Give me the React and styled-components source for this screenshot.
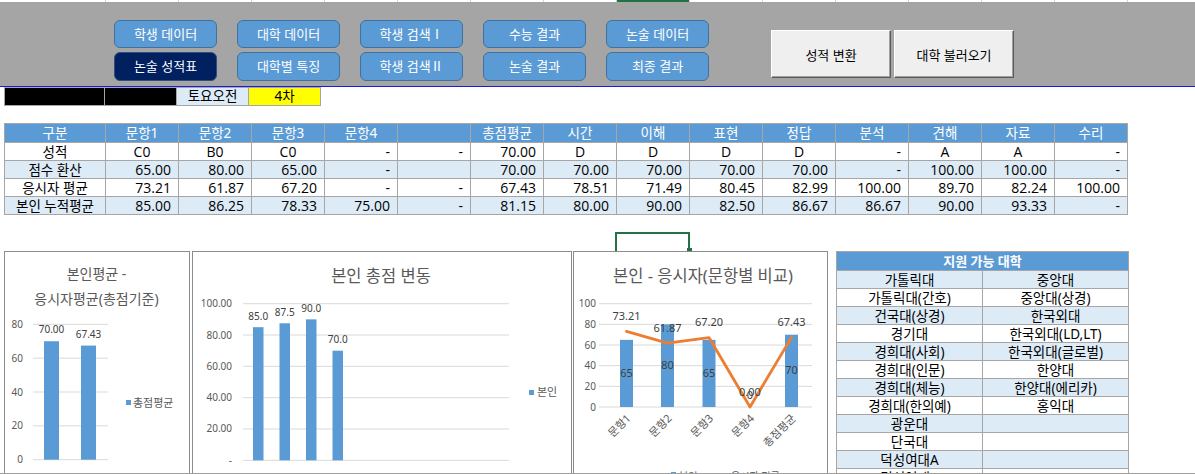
import React from 'react'
import styled, { createGlobalStyle } from 'styled-components'

const CELL_FONT = `"Open Sans", "Noto Sans CJK KR", sans-serif`
const UI_FONT = `"Noto Sans", "Noto Sans CJK KR", sans-serif`

const BLUE = '#5b9bd5'
const LIGHT = '#ddebf7'
const GRID = '#a6a6a6'
const ORANGE = '#ed7d31'
const INK = '#595959'

const GlobalStyle = createGlobalStyle`
  html, body {
    margin: 0;
    padding: 0;
    background: #fff;
  }
  body {
    font-family: ${UI_FONT};
    overflow: hidden;
  }
`

const navTop = ['학생 데이터', '대학 데이터', '학생 검색Ⅰ', '수능 결과', '논술 데이터']
const navBottom = ['논술 성적표', '대학별 특징', '학생 검색Ⅱ', '논술 결과', '최종 결과']

const headers = ['구분', '문항1', '문항2', '문항3', '문항4', '', '총점평균', '시간', '이해', '표현', '정답', '분석', '견해', '자료', '수리']

const rows = [
  { label: '성적', cells: ['C0', 'B0', 'C0', '-', '-', '70.00', 'D', 'D', 'D', 'D', '-', 'A', 'A', '-'] },
  { label: '점수 환산', cells: ['65.00', '80.00', '65.00', '-', '', '70.00', '70.00', '70.00', '70.00', '70.00', '-', '100.00', '100.00', '-'] },
  { label: '응시자 평균', cells: ['73.21', '61.87', '67.20', '-', '-', '67.43', '78.51', '71.49', '80.45', '82.99', '100.00', '89.70', '82.24', '100.00'] },
  { label: '본인 누적평균', cells: ['85.00', '86.25', '78.33', '75.00', '-', '81.15', '80.00', '90.00', '82.50', '86.67', '86.67', '90.00', '93.33', '-'] },
]

const universities = [
  ['가톨릭대', '중앙대'],
  ['가톨릭대(간호)', '중앙대(상경)'],
  ['건국대(상경)', '한국외대'],
  ['경기대', '한국외대(LD,LT)'],
  ['경희대(사회)', '한국외대(글로벌)'],
  ['경희대(인문)', '한양대'],
  ['경희대(체능)', '한양대(에리카)'],
  ['경희대(한의예)', '홍익대'],
  ['광운대', ''],
  ['단국대', ''],
  ['덕성여대A', ''],
  ['덕성여대B', ''],
]

// top sheet row, column edges
const stripCols = [106, ...Array(15).fill(73)]

export default function App() {
  return (
    <Page>
      <GlobalStyle />
      <TopStrip>
        {stripCols.map((w, i) => (
          <StripCell key={i} $w={w} $selected={i === 8} />
        ))}
      </TopStrip>

      <Ribbon>
        <NavGrid>
          {navTop.map(t => (
            <NavButton key={t}>{t}</NavButton>
          ))}
          {navBottom.map((t, i) => (
            <NavButton key={t} $active={i === 0}>{t}</NavButton>
          ))}
        </NavGrid>
        <FormButtons>
          <FormButton>성적 변환</FormButton>
          <FormButton>대학 불러오기</FormButton>
        </FormButtons>
      </Ribbon>

      <InfoRow>
        <InfoCell $w={101} $bg="#000" />
        <InfoCell $w={73} $bg="#000" />
        <InfoCell $w={73} $bg={LIGHT}>토요오전</InfoCell>
        <InfoCell $w={73} $bg="#ffff00">4차</InfoCell>
      </InfoRow>

      <ScoreTable>
        <colgroup>
          <col style={{ width: 101 }} />
          {headers.slice(1).map((_, i) => (
            <col key={i} style={{ width: 73 }} />
          ))}
        </colgroup>
        <thead>
          <tr>
            {headers.map((h, i) => (
              <HeadCell key={i}>{h}</HeadCell>
            ))}
          </tr>
        </thead>
        <tbody>
          {rows.map((r, ri) => (
            <DataRow key={r.label} $shade={ri % 2 === 1}>
              <LabelCell>{r.label}</LabelCell>
              {r.cells.map((c, ci) => (
                <ValueCell key={ci} $center={/^[A-Z]/.test(c)}>{c}</ValueCell>
              ))}
            </DataRow>
          ))}
        </tbody>
      </ScoreTable>

      <Spacer>
        <Selection>
          <Handle />
        </Selection>
      </Spacer>

      <Bottom>
        <ChartCard $w={186}>
          <AverageChart />
        </ChartCard>
        <ChartCard $w={380}>
          <TotalChart />
        </ChartCard>
        <ChartCard $w={255} $ml={1}>
          <CompareChart />
        </ChartCard>
        <UnivTable>
          <thead>
            <tr>
              <UnivHead colSpan={2}>지원 가능 대학</UnivHead>
            </tr>
          </thead>
          <tbody>
            {universities.map((u, i) => (
              <DataRow key={i} $shade={i % 2 === 0}>
                <UnivCell>{u[0]}</UnivCell>
                <UnivCell>{u[1]}</UnivCell>
              </DataRow>
            ))}
          </tbody>
        </UnivTable>
      </Bottom>
      <Footer />
    </Page>
  )
}

/* ---------- charts ---------- */

function AverageChart() {
  const y = v => 207.7 - v * 1.6925
  const bars = [
    { x: 39, v: 70, label: '70.00' },
    { x: 76, v: 67.43, label: '67.43' },
  ]
  return (
    <svg width="184" height="238">
      <Title x="91.5" y="27" fontSize="14">본인평균 -</Title>
      <Title x="91.5" y="52" fontSize="14">응시자평균(총점기준)</Title>
      {[80, 60, 40, 20, 0].map(v => (
        <g key={v}>
          <line x1="28" x2="103" y1={y(v)} y2={y(v)} stroke="#d9d9d9" />
          <Tick x="18" y={y(v) + 3.5} textAnchor="end">{v}</Tick>
        </g>
      ))}
      {bars.map(b => (
        <g key={b.label}>
          <rect x={b.x} y={y(b.v)} width="15" height={y(0) - y(b.v)} fill={BLUE} />
          <Tick x={b.x + 7.5} y={y(b.v) - 8} textAnchor="middle" fill="#404040">{b.label}</Tick>
        </g>
      ))}
      <rect x="121" y="148" width="5" height="5" fill={BLUE} />
      <Tick x="128" y="155" $size={11}>총점평균</Tick>
    </svg>
  )
}

function TotalChart() {
  const y = v => 208.3 - v * 1.566
  const bars = [
    { x: 60, v: 85 },
    { x: 86.5, v: 87.5 },
    { x: 113, v: 90 },
    { x: 139.5, v: 70 },
  ]
  return (
    <svg width="378" height="238">
      <Title x="188" y="30" fontSize="16.5">본인 총점 변동</Title>
      {[100, 80, 60, 40, 20, 0].map(v => (
        <g key={v}>
          <line x1="50" x2="316" y1={y(v)} y2={y(v)} stroke="#d9d9d9" />
          <Tick x="39" y={y(v) + 3.5} textAnchor="end">{v === 0 ? '-' : v.toFixed(2)}</Tick>
        </g>
      ))}
      {bars.map(b => (
        <g key={b.x}>
          <rect x={b.x} y={y(b.v)} width="10.5" height={y(0) - y(b.v)} fill={BLUE} />
          <Tick x={b.x + 5.25} y={y(b.v) - 7.5} textAnchor="middle" fill="#404040">{b.v.toFixed(1)}</Tick>
        </g>
      ))}
      <rect x="336" y="138" width="5" height="5" fill={BLUE} />
      <Tick x="344" y="144" $size={11}>본인</Tick>
    </svg>
  )
}

function CompareChart() {
  const y = v => 155 - v * 1.033
  const cats = [
    { name: '문항1', cx: 52.5, self: 65, avg: 73.21 },
    { name: '문항2', cx: 93.5, self: 80, avg: 61.87 },
    { name: '문항3', cx: 135, self: 65, avg: 67.2 },
    { name: '문항4', cx: 176, self: 0, avg: 0 },
    { name: '총점평균', cx: 217.5, self: 70, avg: 67.43 },
  ]
  const points = cats.map(c => `${c.cx},${y(c.avg)}`).join(' ')
  return (
    <svg width="253" height="238">
      <Title x="129" y="30" fontSize="16.5">본인 - 응시자(문항별 비교)</Title>
      {[100, 80, 60, 40, 20, 0].map(v => (
        <g key={v}>
          <line x1="25" x2="238" y1={y(v)} y2={y(v)} stroke="#d9d9d9" />
          <Tick x="22" y={y(v) + 3.5} textAnchor="end">{v}</Tick>
        </g>
      ))}
      {cats.map(c =>
        c.self > 0 ? (
          <rect key={c.name} x={c.cx - 6.5} y={y(c.self)} width="13" height={y(0) - y(c.self)} fill={BLUE} />
        ) : null
      )}
      <polyline points={points} fill="none" stroke={ORANGE} strokeWidth="2.8" strokeLinejoin="round" strokeLinecap="round" />
      {cats.map(c => (
        <g key={c.name + 'l'}>
          <Tick x={c.cx} y={c.self > 0 ? (y(c.self) + y(0)) / 2 + 3.5 : 146.5} textAnchor="middle" fill="#404040" $size={11}>
            {c.self}
          </Tick>
          <Tick x={c.cx} y={y(c.avg) - 11.5} textAnchor="middle" fill="#404040" $size={11}>{c.avg.toFixed(2)}</Tick>
          <Tick transform={`translate(${c.cx + 5},${167}) rotate(-45)`} textAnchor="end" $size={11}>{c.name}</Tick>
        </g>
      ))}
      <rect x="97" y="220" width="5" height="5" fill={BLUE} />
      <Tick x="105" y="228">본인</Tick>
      <line x1="142" x2="154" y1="223" y2="223" stroke={ORANGE} strokeWidth="2" />
      <Tick x="157" y="228">응시자 평균</Tick>
    </svg>
  )
}

/* ---------- styles ---------- */

const Page = styled.div`
  width: 1195px;
  height: 474px;
  overflow: hidden;
  background: #fff;
`

const TopStrip = styled.div`
  display: flex;
  height: 2px;
  overflow: hidden;
`

const StripCell = styled.div`
  flex: none;
  box-sizing: border-box;
  width: ${p => p.$w}px;
  height: 2px;
  border-right: 1px solid #d4d4d4;
  background: ${p => (p.$selected ? '#217346' : '#fff')};
`

const Ribbon = styled.div`
  display: flex;
  align-items: flex-start;
  height: 84px;
  box-sizing: content-box;
  padding-left: 114px;
  background: #a5a5a5;
  border-bottom: 1px solid #1a1ae6;
`

const NavGrid = styled.div`
  display: grid;
  grid-template-columns: repeat(5, 103px);
  grid-template-rows: 28px 29px;
  column-gap: 20px;
  row-gap: 4px;
  margin-top: 18px;
`

const NavButton = styled.button`
  box-sizing: border-box;
  padding: 0;
  border: 1px solid ${p => (p.$active ? '#2f4f80' : '#41719c')};
  border-radius: 6px;
  background: ${p => (p.$active ? '#002060' : BLUE)};
  color: #fff;
  font-family: ${UI_FONT};
  font-size: 13px;
  line-height: 1;
  cursor: pointer;
`

const FormButtons = styled.div`
  display: flex;
  gap: 3px;
  margin: 28px 0 0 62px;
`

const FormButton = styled.button`
  box-sizing: border-box;
  width: 120px;
  height: 48px;
  padding: 0;
  background: #efefef;
  border: 1px solid;
  border-color: #fff #5a5a5a #5a5a5a #fff;
  box-shadow: inset -1px -1px 0 #a0a0a0;
  color: #000;
  font-family: ${UI_FONT};
  font-size: 13px;
  cursor: pointer;
`

const InfoRow = styled.div`
  display: flex;
  margin-left: 4px;
  height: 19px;
`

const InfoCell = styled.div`
  flex: none;
  box-sizing: border-box;
  width: ${p => p.$w}px;
  margin-left: -1px;
  border: 1px solid ${GRID};
  background: ${p => p.$bg};
  font-family: ${UI_FONT};
  font-size: 13.5px;
  line-height: 17px;
  text-align: center;
  color: #000;
  &:first-child {
    margin-left: 0;
  }
`

const ScoreTable = styled.table`
  margin: 17px 0 0 4px;
  border-collapse: collapse;
  table-layout: fixed;
  width: 1123px;
  font-family: ${CELL_FONT};
  font-size: 14px;
  color: #000;
`

const HeadCell = styled.th`
  height: 18px;
  padding: 0;
  border: 1px solid ${GRID};
  background: ${BLUE};
  color: #fff;
  font-family: ${UI_FONT};
  font-size: 13.5px;
  font-weight: 400;
  line-height: 16px;
  text-align: center;
`

const DataRow = styled.tr`
  height: 18px;
  background: ${p => (p.$shade ? LIGHT : '#fff')};
`

const LabelCell = styled.td`
  padding: 0;
  border: 1px solid ${GRID};
  font-family: ${UI_FONT};
  font-size: 13.5px;
  line-height: 16px;
  text-align: center;
  white-space: nowrap;
`

const ValueCell = styled.td`
  padding: 0 7px;
  border: 1px solid ${GRID};
  line-height: 16px;
  text-align: ${p => (p.$center ? 'center' : 'right')};
  white-space: nowrap;
`

const Spacer = styled.div`
  position: relative;
  height: 36px;
`

const Selection = styled.div`
  position: absolute;
  left: 615px;
  top: 17px;
  width: 75px;
  height: 19px;
  box-sizing: border-box;
  border: 2px solid #217346;
  border-bottom: none;
`

const Handle = styled.div`
  position: absolute;
  right: -4px;
  bottom: 0;
  width: 5px;
  height: 3px;
  background: #217346;
`

const Bottom = styled.div`
  display: flex;
  align-items: flex-start;
  gap: 2px;
  height: 222px;
  padding-left: 4px;
  overflow: hidden;
`

const ChartCard = styled.div`
  flex: none;
  box-sizing: border-box;
  width: ${p => p.$w}px;
  height: 240px;
  margin-left: ${p => (p.$ml ? -p.$ml : 0)}px;
  border: 1px solid #8c8c8c;
  background: #fff;
  svg {
    display: block;
  }
`

const Title = styled.text`
  font-family: ${UI_FONT};
  fill: ${INK};
  text-anchor: middle;
`

const Tick = styled.text`
  font-family: ${UI_FONT};
  font-size: ${p => p.$size || 10}px;
  fill: ${p => p.fill || INK};
`

const UnivTable = styled.table`
  flex: none;
  margin-left: 6px;
  width: 293px;
  border-collapse: collapse;
  table-layout: fixed;
  font-family: ${CELL_FONT};
  font-size: 13px;
  color: #000;
`

const UnivHead = styled.th`
  height: 18px;
  padding: 0;
  border: 1px solid ${GRID};
  background: ${BLUE};
  color: #fff;
  font-family: ${UI_FONT};
  font-size: 13px;
  font-weight: 700;
  line-height: 16px;
  text-align: center;
`

const UnivCell = styled.td`
  width: 50%;
  padding: 0;
  border: 1px solid ${GRID};
  font-family: ${UI_FONT};
  font-size: 13.5px;
  line-height: 16px;
  text-align: center;
  white-space: nowrap;
`

const Footer = styled.div`
  height: 2px;
  border-top: 1px solid #a0a0a0;
`
